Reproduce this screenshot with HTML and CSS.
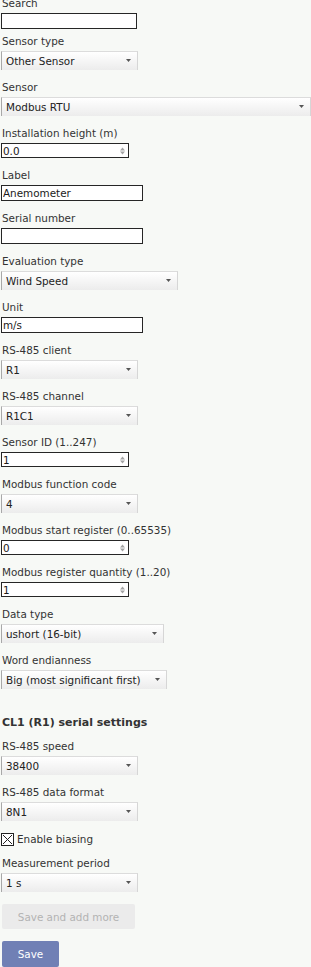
FILE: index.html
```html
<!DOCTYPE html>
<html>
<head>
<meta charset="utf-8">
<link rel="stylesheet" href="styles.css">
</head>
<body>
<form class="form">
  <div class="field field-first">
    <label class="lbl">Search</label>
    <input class="input w136" type="text" value="">
  </div>
  <div class="field field-tight">
    <label class="lbl">Sensor type</label>
    <div class="select w137"><span>Other Sensor</span><svg class="caret" width="5" height="4" viewBox="0 0 5 4"><polygon points="0,0 5,0 2.5,3" /></svg></div>
  </div>
  <div class="field">
    <label class="lbl">Sensor</label>
    <div class="select wfull"><span>Modbus RTU</span><svg class="caret" width="5" height="4" viewBox="0 0 5 4"><polygon points="0,0 5,0 2.5,3" /></svg></div>
  </div>
  <div class="field">
    <label class="lbl">Installation height (m)</label>
    <div class="num w128"><span>0.0</span><svg class="spin" width="5" height="8" viewBox="0 0 5 8"><polygon points="0,3.5 2.5,0.5 5,3.5" /><polygon points="0,4.5 2.5,7.5 5,4.5" /></svg></div>
  </div>
  <div class="field">
    <label class="lbl">Label</label>
    <input class="input w142" type="text" value="Anemometer">
  </div>
  <div class="field">
    <label class="lbl">Serial number</label>
    <input class="input w142" type="text" value="">
  </div>
  <div class="field">
    <label class="lbl">Evaluation type</label>
    <div class="select w177"><span>Wind Speed</span><svg class="caret" width="5" height="4" viewBox="0 0 5 4"><polygon points="0,0 5,0 2.5,3" /></svg></div>
  </div>
  <div class="field">
    <label class="lbl">Unit</label>
    <input class="input w142" type="text" value="m/s">
  </div>
  <div class="field">
    <label class="lbl">RS-485 client</label>
    <div class="select w137"><span>R1</span><svg class="caret" width="5" height="4" viewBox="0 0 5 4"><polygon points="0,0 5,0 2.5,3" /></svg></div>
  </div>
  <div class="field">
    <label class="lbl">RS-485 channel</label>
    <div class="select w137"><span>R1C1</span><svg class="caret" width="5" height="4" viewBox="0 0 5 4"><polygon points="0,0 5,0 2.5,3" /></svg></div>
  </div>
  <div class="field">
    <label class="lbl">Sensor ID (1..247)</label>
    <div class="num w128"><span>1</span><svg class="spin" width="5" height="8" viewBox="0 0 5 8"><polygon points="0,3.5 2.5,0.5 5,3.5" /><polygon points="0,4.5 2.5,7.5 5,4.5" /></svg></div>
  </div>
  <div class="field">
    <label class="lbl">Modbus function code</label>
    <div class="select w137"><span>4</span><svg class="caret" width="5" height="4" viewBox="0 0 5 4"><polygon points="0,0 5,0 2.5,3" /></svg></div>
  </div>
  <div class="field">
    <label class="lbl">Modbus start register (0..65535)</label>
    <div class="num w128"><span>0</span><svg class="spin" width="5" height="8" viewBox="0 0 5 8"><polygon points="0,3.5 2.5,0.5 5,3.5" /><polygon points="0,4.5 2.5,7.5 5,4.5" /></svg></div>
  </div>
  <div class="field">
    <label class="lbl">Modbus register quantity (1..20)</label>
    <div class="num w128"><span>1</span><svg class="spin" width="5" height="8" viewBox="0 0 5 8"><polygon points="0,3.5 2.5,0.5 5,3.5" /><polygon points="0,4.5 2.5,7.5 5,4.5" /></svg></div>
  </div>
  <div class="field">
    <label class="lbl">Data type</label>
    <div class="select w163"><span>ushort (16-bit)</span><svg class="caret" width="5" height="4" viewBox="0 0 5 4"><polygon points="0,0 5,0 2.5,3" /></svg></div>
  </div>
  <div class="field">
    <label class="lbl">Word endianness</label>
    <div class="select w166"><span>Big (most significant first)</span><svg class="caret" width="5" height="4" viewBox="0 0 5 4"><polygon points="0,0 5,0 2.5,3" /></svg></div>
  </div>

  <h3 class="section">CL1 (R1) serial settings</h3>

  <div class="field">
    <label class="lbl">RS-485 speed</label>
    <div class="select w137"><span>38400</span><svg class="caret" width="5" height="4" viewBox="0 0 5 4"><polygon points="0,0 5,0 2.5,3" /></svg></div>
  </div>
  <div class="field">
    <label class="lbl">RS-485 data format</label>
    <div class="select w137"><span>8N1</span><svg class="caret" width="5" height="4" viewBox="0 0 5 4"><polygon points="0,0 5,0 2.5,3" /></svg></div>
  </div>
  <div class="check">
    <svg class="box" width="13" height="13" viewBox="0 0 13 13"><rect x="0.5" y="0.5" width="12" height="12" /><line x1="2" y1="2" x2="11" y2="11" /><line x1="11" y1="2" x2="2" y2="11" /></svg>
    <span>Enable biasing</span>
  </div>
  <div class="field">
    <label class="lbl">Measurement period</label>
    <div class="select w137"><span>1 s</span><svg class="caret" width="5" height="4" viewBox="0 0 5 4"><polygon points="0,0 5,0 2.5,3" /></svg></div>
  </div>

  <div class="actions">
    <button type="button" class="btn btn-more">Save and add more</button>
    <button type="button" class="btn btn-save">Save</button>
  </div>
</form>
</body>
</html>
```

FILE: styles.css
```css
html, body {
  margin: 0;
  padding: 0;
}
body {
  background: #f7f9f6;
  font-family: "DejaVu Sans", "Verdana", sans-serif;
  font-size: 10.4px;
  color: #333333;
}
.form {
  margin-top: -3px;
  padding-left: 1px;
}
.field {
  margin-top: 11px;
}
.field-first {
  margin-top: 0;
}
.field-tight {
  margin-top: 6px;
}
.lbl {
  display: block;
  height: 13px;
  line-height: 13px;
  margin-bottom: 3px;
  padding-left: 1px;
  white-space: nowrap;
}
.input {
  display: block;
  box-sizing: border-box;
  height: 16px;
  margin: 0;
  padding: 0 1px;
  border: 1px solid #262626;
  background: #ffffff;
  font-family: inherit;
  font-size: 10.4px;
  color: #1a1a1a;
  outline: none;
}
.num {
  box-sizing: border-box;
  height: 15px;
  border: 1px solid #262626;
  background: #ffffff;
  display: flex;
  align-items: center;
  justify-content: space-between;
  padding: 0 3px 0 1px;
  color: #1a1a1a;
}
.spin polygon {
  fill: #a3a3a3;
}
.select {
  box-sizing: border-box;
  height: 19px;
  display: flex;
  align-items: center;
  justify-content: space-between;
  padding: 0 6px 1px 4px;
  background: linear-gradient(#ffffff, #ececec);
  border-left: 1px solid #a8a8a8;
  border-top: 1px solid #dcdcdc;
  border-right: 1px solid #d6d6d6;
  color: #222222;
  white-space: nowrap;
}
.caret polygon {
  fill: #555555;
}
.w128 { width: 128px; }
.w136 { width: 136px; }
.w137 { width: 137px; }
.w142 { width: 142px; }
.w163 { width: 163px; }
.w166 { width: 166px; }
.w177 { width: 177px; }
.wfull { width: 310px; }
.section {
  margin: 27px 0 0 0;
  padding-left: 1px;
  font-size: 11px;
  line-height: 13px;
  font-weight: bold;
  color: #333333;
}
.check {
  margin-top: 11px;
  height: 14px;
  display: flex;
  align-items: center;
  gap: 3px;
}
.box rect {
  fill: #ffffff;
  stroke: #222222;
  stroke-width: 1;
}
.box line {
  stroke: #222222;
  stroke-width: 1;
}
.actions {
  margin-top: 12px;
  display: flex;
  flex-direction: column;
  align-items: flex-start;
  gap: 12px;
  padding-left: 1px;
}
.btn {
  box-sizing: border-box;
  border: none;
  border-radius: 2px;
  font-family: inherit;
  font-size: 10.4px;
  margin: 0;
  padding: 0;
}
.btn-more {
  width: 133px;
  height: 25px;
  background: #ebebeb;
  color: #b3b3b3;
}
.btn-save {
  width: 57px;
  height: 26px;
  background: #7080b5;
  color: #ffffff;
}
```
